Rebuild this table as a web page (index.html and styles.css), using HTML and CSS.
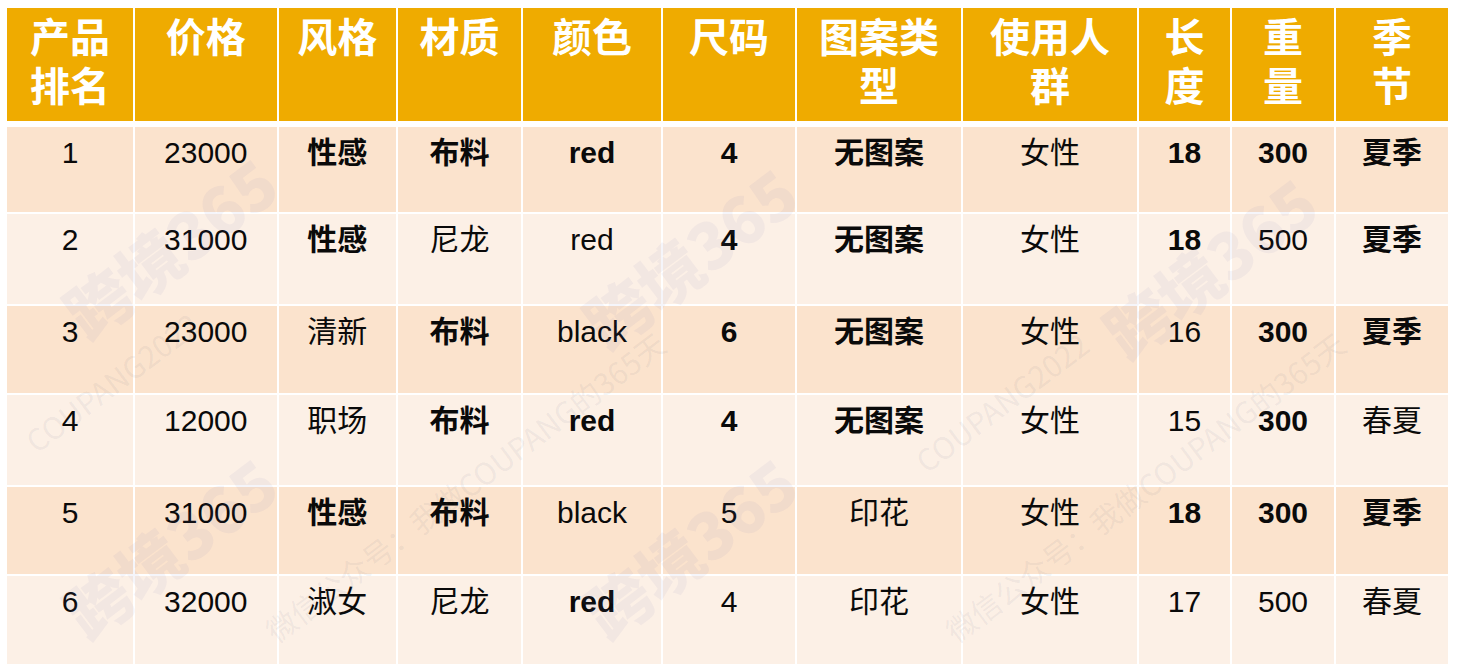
FILE: index.html
```html
<!DOCTYPE html>
<html lang="zh-CN">
<head>
<meta charset="utf-8">
<title>产品排名</title>
<link rel="stylesheet" href="styles.css">
</head>
<body>
<div class="page">
  <div class="sheet">
    <div class="grid">
      <div class="th">产品<br>排名</div>
      <div class="th">价格</div>
      <div class="th">风格</div>
      <div class="th">材质</div>
      <div class="th">颜色</div>
      <div class="th">尺码</div>
      <div class="th">图案类<br>型</div>
      <div class="th">使用人<br>群</div>
      <div class="th">长<br>度</div>
      <div class="th">重<br>量</div>
      <div class="th">季<br>节</div>

      <div class="td odd">1</div>
      <div class="td odd">23000</div>
      <div class="td odd b">性感</div>
      <div class="td odd b">布料</div>
      <div class="td odd b">red</div>
      <div class="td odd b">4</div>
      <div class="td odd b">无图案</div>
      <div class="td odd">女性</div>
      <div class="td odd b">18</div>
      <div class="td odd b">300</div>
      <div class="td odd b">夏季</div>

      <div class="td even">2</div>
      <div class="td even">31000</div>
      <div class="td even b">性感</div>
      <div class="td even">尼龙</div>
      <div class="td even">red</div>
      <div class="td even b">4</div>
      <div class="td even b">无图案</div>
      <div class="td even">女性</div>
      <div class="td even b">18</div>
      <div class="td even">500</div>
      <div class="td even b">夏季</div>

      <div class="td odd">3</div>
      <div class="td odd">23000</div>
      <div class="td odd">清新</div>
      <div class="td odd b">布料</div>
      <div class="td odd">black</div>
      <div class="td odd b">6</div>
      <div class="td odd b">无图案</div>
      <div class="td odd">女性</div>
      <div class="td odd">16</div>
      <div class="td odd b">300</div>
      <div class="td odd b">夏季</div>

      <div class="td even">4</div>
      <div class="td even">12000</div>
      <div class="td even">职场</div>
      <div class="td even b">布料</div>
      <div class="td even b">red</div>
      <div class="td even b">4</div>
      <div class="td even b">无图案</div>
      <div class="td even">女性</div>
      <div class="td even">15</div>
      <div class="td even b">300</div>
      <div class="td even">春夏</div>

      <div class="td odd">5</div>
      <div class="td odd">31000</div>
      <div class="td odd b">性感</div>
      <div class="td odd b">布料</div>
      <div class="td odd">black</div>
      <div class="td odd">5</div>
      <div class="td odd">印花</div>
      <div class="td odd">女性</div>
      <div class="td odd b">18</div>
      <div class="td odd b">300</div>
      <div class="td odd b">夏季</div>

      <div class="td even">6</div>
      <div class="td even">32000</div>
      <div class="td even">淑女</div>
      <div class="td even">尼龙</div>
      <div class="td even b">red</div>
      <div class="td even">4</div>
      <div class="td even">印花</div>
      <div class="td even">女性</div>
      <div class="td even">17</div>
      <div class="td even">500</div>
      <div class="td even">春夏</div>
    </div>

    <div class="watermark" aria-hidden="true">
      <span class="wm-text wm1">微信公众号：我做COUPANG的365天</span>
      <span class="wm-text wm2">微信公众号：我做COUPANG的365天</span>
      <span class="wm-text wm3">COUPANG2022</span>
      <span class="wm-text wm4">COUPANG2022</span>
      <span class="wm-logo lg1">跨境365</span>
      <span class="wm-logo lg2">跨境365</span>
      <span class="wm-logo lg3">跨境365</span>
      <span class="wm-logo lg4">跨境365</span>
      <span class="wm-logo lg5">跨境365</span>
    </div>
  </div>
</div>
</body>
</html>
```

FILE: styles.css
```css
html, body {
  margin: 0;
  padding: 0;
  background: #ffffff;
}

.page {
  width: 1458px;
  height: 668px;
  overflow: hidden;
  padding: 8px 0 0 7px;
  box-sizing: border-box;
  font-family: "Liberation Sans", "Noto Sans CJK SC", sans-serif;
}

.sheet {
  position: relative;
  width: 1441px;
}

.grid {
  display: grid;
  grid-template-columns: 126px 141.5px 117.5px 123px 138px 132px 164px 174px 91px 102px 112px;
  grid-template-rows: 117px 85px 90px 87px 90px 87px 88px;
  gap: 2px;
  background: #ffffff;
}

.th {
  height: 113px;
  align-self: start;
  box-sizing: border-box;
  background: #efab00;
  color: #ffffff;
  font-weight: bold;
  font-size: 40px;
  line-height: 49px;
  padding-top: 6px;
  text-align: center;
}

.td {
  box-sizing: border-box;
  color: #0a0a0a;
  font-size: 30px;
  line-height: 36px;
  padding-top: 8px;
  text-align: center;
}

.odd {
  background: #fbe3cd;
}

.even {
  background: #fcf0e6;
}

.b {
  font-weight: bold;
}

.watermark {
  position: absolute;
  inset: 0;
  pointer-events: none;
}

.wm-text {
  position: absolute;
  white-space: nowrap;
  font-family: "Noto Sans CJK SC", "Liberation Sans", sans-serif;
  font-size: 30px;
  line-height: 40px;
  color: rgba(90, 95, 120, 0.08);
  transform-origin: 0 0;
  transform: rotate(-37deg);
}

.wm1 { left: 250px; top: 610px; }
.wm2 { left: 930px; top: 610px; }
.wm3 { left: 10px; top: 420px; }
.wm4 { left: 900px; top: 440px; }

.wm-logo {
  position: absolute;
  white-space: nowrap;
  font-family: "Noto Sans CJK SC", sans-serif;
  font-weight: 900;
  font-size: 64px;
  line-height: 80px;
  color: rgba(110, 120, 185, 0.07);
  transform-origin: 0 0;
  transform: rotate(-37deg);
}

.lg1 { left: 40px; top: 280px; }
.lg2 { left: 560px; top: 290px; }
.lg3 { left: 1080px; top: 300px; }
.lg4 { left: 560px; top: 580px; }
.lg5 { left: 40px; top: 580px; }
```
